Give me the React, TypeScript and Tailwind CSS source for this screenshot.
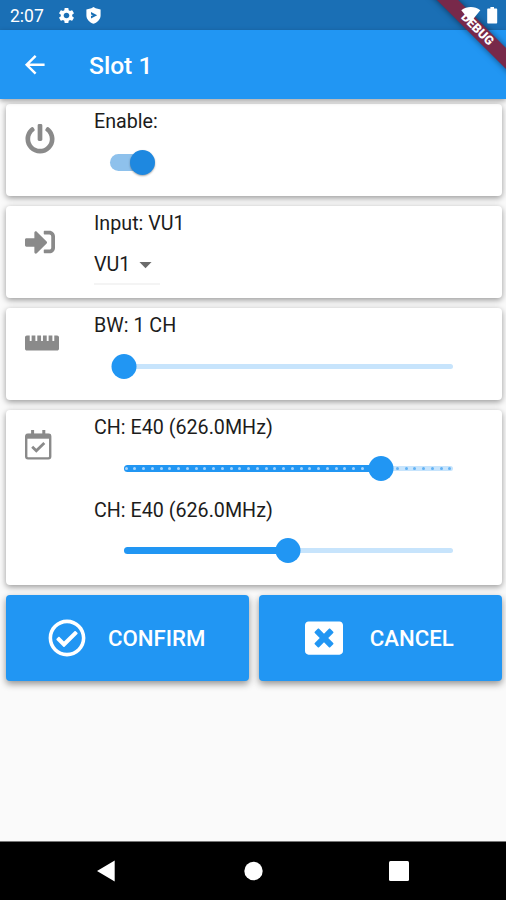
import type { ReactNode } from "react";
import {
  FaPowerOff,
  FaSignInAlt,
  FaRulerHorizontal,
  FaRegCheckCircle,
  FaWindowClose,
} from "react-icons/fa";
import { MdArrowBack, MdArrowDropDown, MdSettings } from "react-icons/md";

interface CardProps {
  icon: ReactNode;
  children: ReactNode;
  className?: string;
}

function Card({ icon, children, className = "h-[92px]" }: CardProps) {
  return (
    <section
      className={`flex rounded-[4px] bg-white pt-[5px] shadow-[0_2px_6px_rgba(0,0,0,0.4)] ${className}`}
    >
      <div className="w-[88px] shrink-0 pt-[15px] pl-[19px] text-[#8a8a8a]">{icon}</div>
      <div className="flex-1">{children}</div>
    </section>
  );
}

interface FieldProps {
  label: string;
  children: ReactNode;
}

function Field({ label, children }: FieldProps) {
  return (
    <div>
      <div className="h-6 text-[19.7px] leading-[25px] text-[#1c1c1c]">{label}</div>
      <div className="flex h-[58.5px] items-center">{children}</div>
    </div>
  );
}

interface SliderProps {
  value: number;
  divisions?: number;
}

function Slider({ value, divisions = 0 }: SliderProps) {
  const ticks = divisions > 0 ? Array.from({ length: divisions + 1 }, (_, i) => i / divisions) : [];

  return (
    <div className="relative ml-[29.5px] flex h-[25px] w-[329px] items-center">
      <div className="h-[5px] w-full rounded-full bg-[#c7e4fc]" />
      {value > 0 && (
        <div
          className="absolute left-0 h-[7px] rounded-full bg-[#2196f3]"
          style={{ width: `${value * 100}%` }}
        />
      )}
      {/* Tick marks */}
      <div className="absolute inset-x-[1px] flex justify-between">
        {ticks.map((t) => (
          <span
            key={t}
            className={`size-[3px] rounded-full ${t < value ? "bg-[#a5d3fa]" : "bg-[#62b2f5]"}`}
          />
        ))}
      </div>
      {/* Thumb */}
      <div
        className="absolute size-[25px] -translate-x-1/2 rounded-full bg-[#2196f3]"
        style={{ left: `${value * 100}%` }}
      />
    </div>
  );
}

function Switch() {
  return (
    <div className="relative ml-[16px] flex h-[25px] w-[45px] items-center">
      <div className="h-[17px] w-[40px] rounded-full bg-[#8ec1ec]" />
      <div className="absolute right-0 size-[25px] rounded-full bg-[#1e88e0] shadow-[0_1px_2px_rgba(0,0,0,0.35)]" />
    </div>
  );
}

function ShieldIcon() {
  return (
    <svg width="15" height="17" viewBox="0 0 15 17">
      <path
        fill="#fff"
        fillRule="evenodd"
        d="M7.5 0 9.6 1.3 14.6 2.4V8.5C14.6 12.2 11.6 15.3 7.5 16.8 3.4 15.3.4 12.2.4 8.5V2.4L5.4 1.3ZM5 5V11.4L11.2 8.2Z"
      />
      <path fill="#fff" d="M5 7.4 7 8.2 5 9Z" />
    </svg>
  );
}

function CalendarCheckIcon() {
  return (
    <svg width="27" height="30" viewBox="0 0 27 30" fill="none" stroke="currentColor">
      <rect x="1.2" y="4.6" width="24" height="23.8" rx="1.8" strokeWidth="2.4" />
      <path d="M1 6.3H25.5" strokeWidth="4.8" />
      <path d="M7.6 0V5M18.8 0V5" strokeWidth="3" />
      <path d="M7.2 16.8 11.3 20.8 19.3 13" strokeWidth="2.8" />
    </svg>
  );
}

function StatusIcons() {
  return (
    <svg width="46" height="30" viewBox="460 0 46 30" fill="#fff">
      <path d="M470.8 22 461.3 10.2C467 6 474.6 6 480.3 10.2Z" />
      <path d="M490.4 7H494V8.6H496.4Q497.2 8.6 497.2 9.4V22.6Q497.2 23.5 496.4 23.5H488Q487.2 23.5 487.2 22.6V9.4Q487.2 8.6 488 8.6H490.4Z" />
    </svg>
  );
}

export default function App() {
  return (
    <div className="relative flex h-[900px] w-[506px] flex-col overflow-hidden bg-[#fafafa] font-['Roboto',sans-serif]">
      {/* Status bar */}
      <div className="flex h-[30px] items-center bg-[#1a6fb5] pl-[10px] text-white">
        <span className="w-[47px] pt-[2px] text-[17.5px] leading-5">2:07</span>
        <MdSettings size={19} />
        <div className="ml-[10px]">
          <ShieldIcon />
        </div>
      </div>

      {/* App bar */}
      <header className="z-10 flex h-[69px] items-center bg-[#2196f3] pl-[20px] text-white shadow-[0_2px_5px_rgba(0,0,0,0.35)]">
        <MdArrowBack size={29.5} />
        <h1 className="ml-[39.5px] pt-[3px] text-[24.6px] font-medium">Slot 1</h1>
      </header>

      <main className="flex flex-1 flex-col gap-[10px] pt-[5px] pr-[4.5px] pl-[6px]">
        <Card icon={<FaPowerOff size={30} />}>
          <Field label="Enable:">
            <Switch />
          </Field>
        </Card>

        <Card icon={<FaSignInAlt size={30} className="mt-[1px]" />}>
          <Field label="Input: VU1">
            <div className="flex h-[42px] w-[66px] items-center border-b-2 border-[#f4f4f4] text-[19.7px] text-[#1c1c1c]">
              <span className="pt-[3px]">VU1</span>
              <MdArrowDropDown size={29} className="ml-[1px] mt-[2px] shrink-0 text-[#6b6b6b]" />
            </div>
          </Field>
        </Card>

        <Card icon={<FaRulerHorizontal size={34} className="-mt-[2px]" />}>
          <Field label="BW: 1 CH">
            <Slider value={0} />
          </Field>
        </Card>

        <Card className="h-[175px]" icon={<CalendarCheckIcon />}>
          <Field label="CH: E40 (626.0MHz)">
            <Slider value={0.784} divisions={37} />
          </Field>
          <Field label="CH: E40 (626.0MHz)">
            <Slider value={0.5} />
          </Field>
        </Card>

        {/* Actions */}
        <div className="grid grid-cols-2 gap-[10px] text-[22.2px] font-medium text-white">
          <button className="flex h-[86px] items-center rounded-[4px] bg-[#2196f3] pl-[41.5px] shadow-[0_3px_7px_rgba(0,0,0,0.42)]">
            <FaRegCheckCircle size={38} />
            <span className="ml-[22.5px] pt-[2px]">CONFIRM</span>
          </button>
          <button className="flex h-[86px] items-center rounded-[4px] bg-[#2196f3] pl-[46px] shadow-[0_3px_7px_rgba(0,0,0,0.42)]">
            <FaWindowClose size={38} />
            <span className="ml-[27px] pt-[2px]">CANCEL</span>
          </button>
        </div>
      </main>

      {/* Navigation bar */}
      <nav className="h-[59px] border-t border-[#777] bg-black">
        <svg width="506" height="58" viewBox="0 842 506 58" fill="#fff">
          <path d="M97 871 114.7 860.5V881.5Z" />
          <circle cx="253.5" cy="871" r="9.2" />
          <rect x="389" y="861" width="20" height="20" rx="1.5" />
        </svg>
      </nav>

      {/* Debug ribbon */}
      <div className="absolute top-[22px] left-[417px] z-20 flex h-[15px] w-[120px] rotate-45 items-center justify-center bg-[#78294a] text-[12.5px] font-black text-white shadow-[0_0_6px_rgba(0,0,0,0.5)]">
        DEBUG
      </div>
      <div className="absolute top-0 right-0 z-30">
        <StatusIcons />
      </div>
    </div>
  );
}
